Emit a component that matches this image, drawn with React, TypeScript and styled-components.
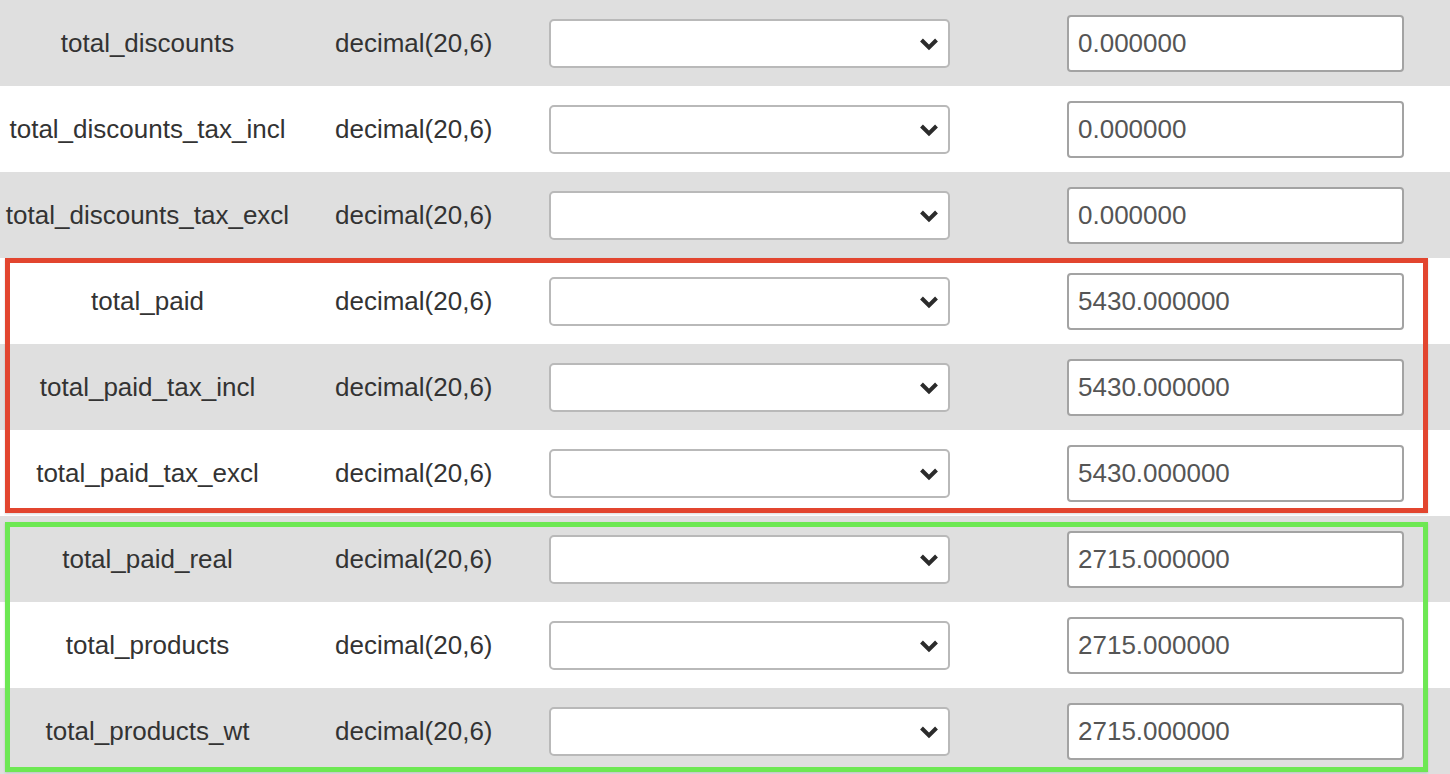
import React from "react";
import styled, { createGlobalStyle } from "styled-components";

const Global = createGlobalStyle`
  html, body { margin: 0; padding: 0; background: #ffffff; }
  body { font-family: "Liberation Sans", Arial, Helvetica, sans-serif; }
  * { box-sizing: border-box; }
`;

const Table = styled.div`
  position: relative;
  width: 1450px;
  display: flex;
  flex-direction: column;
`;

const Row = styled.div<{ $alt: boolean }>`
  height: 86px;
  display: grid;
  grid-template-columns: 295px 254px 401px 117px 337px 1fr;
  align-items: center;
  background: ${(p) => (p.$alt ? "#dfdfdf" : "#ffffff")};
`;

const NameCell = styled.div`
  text-align: center;
  font-size: 26px;
  color: #333333;
  white-space: nowrap;
`;

const TypeCell = styled.div`
  padding-left: 40px;
  font-size: 26px;
  color: #333333;
  white-space: nowrap;
`;

const SelectBox = styled.div`
  height: 49px;
  margin-top: 1px;
  background: #ffffff;
  border: 2px solid #b9b9b9;
  border-radius: 5px;
  display: flex;
  align-items: center;
  justify-content: flex-end;
  padding-right: 9px;
`;

const Spacer = styled.div``;

const ValueInput = styled.div`
  height: 57px;
  background: #ffffff;
  border: 2px solid #a3a3a3;
  border-radius: 4px;
  display: flex;
  align-items: center;
  padding-left: 9px;
  font-size: 26px;
  color: #555555;
`;

const Frame = styled.div<{ $color: string; $top: number; $height: number }>`
  position: absolute;
  left: 5px;
  top: ${(p) => p.$top}px;
  width: 1423px;
  height: ${(p) => p.$height}px;
  border: 5px solid ${(p) => p.$color};
  box-shadow: 0 1px 2px rgba(0, 0, 0, 0.15);
  pointer-events: none;
`;

const Chevron = () => (
  <svg width="20" height="14" viewBox="0 0 20 14">
    <polyline
      points="2.5,3 10,10.5 17.5,3"
      fill="none"
      stroke="#2b2b2b"
      strokeWidth="4"
      strokeLinecap="butt"
      strokeLinejoin="miter"
    />
  </svg>
);

const rows = [
  { name: "total_discounts", value: "0.000000" },
  { name: "total_discounts_tax_incl", value: "0.000000" },
  { name: "total_discounts_tax_excl", value: "0.000000" },
  { name: "total_paid", value: "5430.000000" },
  { name: "total_paid_tax_incl", value: "5430.000000" },
  { name: "total_paid_tax_excl", value: "5430.000000" },
  { name: "total_paid_real", value: "2715.000000" },
  { name: "total_products", value: "2715.000000" },
  { name: "total_products_wt", value: "2715.000000" },
];

export default function App() {
  return (
    <>
      <Global />
      <Table>
        {rows.map((r, i) => (
          <Row key={r.name} $alt={i % 2 === 0}>
            <NameCell>{r.name}</NameCell>
            <TypeCell>decimal(20,6)</TypeCell>
            <SelectBox>
              <Chevron />
            </SelectBox>
            <Spacer />
            <ValueInput>{r.value}</ValueInput>
            <Spacer />
          </Row>
        ))}
        <Frame $color="#e2452f" $top={258} $height={255} />
        <Frame $color="#6de853" $top={522} $height={250} />
      </Table>
    </>
  );
}
